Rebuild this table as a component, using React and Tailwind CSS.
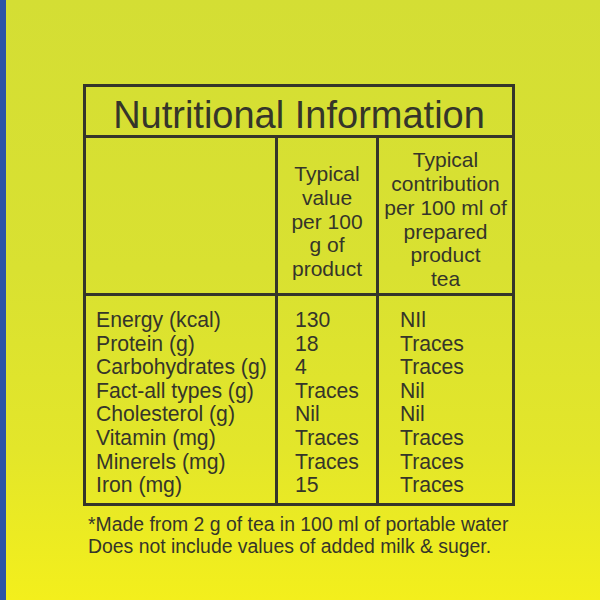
export default function App() {
  const rows = [
    ["Energy (kcal)", "130", "NIl"],
    ["Protein (g)", "18", "Traces"],
    ["Carbohydrates (g)", "4", "Traces"],
    ["Fact-all types (g)", "Traces", "Nil"],
    ["Cholesterol (g)", "Nil", "Nil"],
    ["Vitamin (mg)", "Traces", "Traces"],
    ["Minerels (mg)", "Traces", "Traces"],
    ["Iron (mg)", "15", "Traces"],
  ];
  return (
    <div
      className="flex w-[600px] h-[600px] overflow-hidden text-[#35352a]"
      style={{ fontFamily: '"Liberation Sans", Arial, sans-serif' }}
    >
      <div className="w-[6px] h-full bg-[#2c54a6] shrink-0" />
      <div className="flex-1 h-full bg-[linear-gradient(180deg,#d4de34_0%,#d9e131_45%,#e3e62a_75%,#f3ef1c_100%)] pl-[77px] pt-[84px]">
        <div className="w-[432px] border-[3px] border-[#35352a]">
          <div className="h-[51px] border-b-[3px] border-[#35352a] flex items-center justify-center text-[38px] leading-none pt-[7px]">
            Nutritional Information
          </div>
          <div className="flex h-[158px] border-b-[3px] border-[#35352a] text-[21px] leading-[23.8px]">
            <div className="w-[192px] border-r-[3px] border-[#35352a]" />
            <div className="w-[101px] border-r-[3px] border-[#35352a] flex items-center justify-center text-center pt-[12px]">
              <div>Typical<br />value<br />per 100<br />g of<br />product</div>
            </div>
            <div className="flex-1 flex items-center justify-center text-center pt-[8px]">
              <div>Typical<br />contribution<br />per 100 ml of<br />prepared<br />product<br />tea</div>
            </div>
          </div>
          <div className="flex h-[207px] text-[21.2px] leading-[23.6px]">
            <div className="w-[192px] border-r-[3px] border-[#35352a] pl-[10px] pt-[12px]">
              {rows.map((r) => (
                <div key={r[0]}>{r[0]}</div>
              ))}
            </div>
            <div className="w-[101px] border-r-[3px] border-[#35352a] pl-[17px] pt-[12px]">
              {rows.map((r, i) => (
                <div key={i}>{r[1]}</div>
              ))}
            </div>
            <div className="flex-1 pl-[21px] pt-[12px]">
              {rows.map((r, i) => (
                <div key={i}>{r[2]}</div>
              ))}
            </div>
          </div>
        </div>
        <div className="ml-[5px] mt-[7px] text-[19.4px] leading-[22px]">
          <div>*Made from 2 g of tea in 100 ml of portable water</div>
          <div>Does not include values of added milk &amp; suger.</div>
        </div>
      </div>
    </div>
  );
}
